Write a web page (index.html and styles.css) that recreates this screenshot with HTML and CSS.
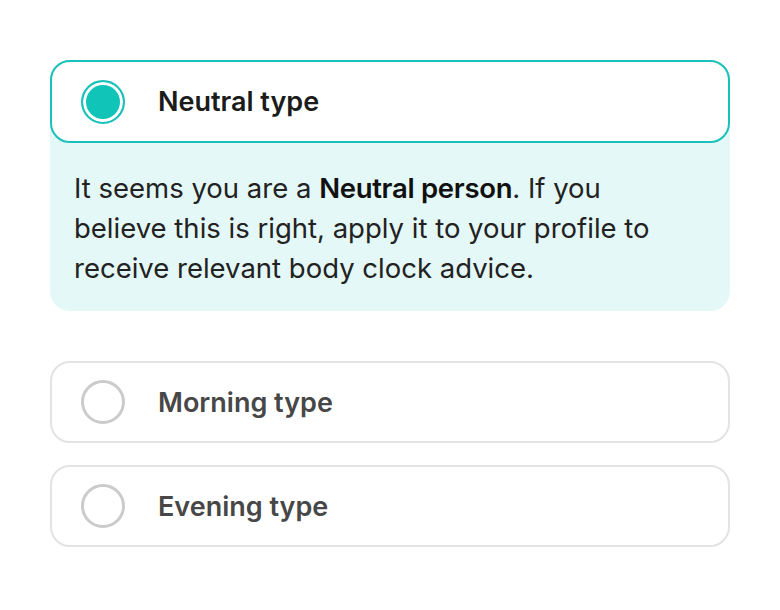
FILE: index.html
```html
<!DOCTYPE html>
<html>
<head>
<meta charset="utf-8">
<link rel="stylesheet" href="styles.css">
</head>
<body>
<div class="list">
  <div class="group">
    <div class="option selected">
      <span class="radio on"></span>
      <span class="label">Neutral type</span>
    </div>
    <p class="desc">It seems you are a <b>Neutral person</b>. If you believe this is right, apply it to your profile to receive relevant body clock advice.</p>
  </div>
  <div class="option">
    <span class="radio"></span>
    <span class="label">Morning type</span>
  </div>
  <div class="option">
    <span class="radio"></span>
    <span class="label">Evening type</span>
  </div>
</div>
</body>
</html>
```
FILE: styles.css
```css
html, body {
  margin: 0;
  padding: 0;
  background: #ffffff;
}
body {
  font-family: Inter, "Liberation Sans", sans-serif;
}
.list {
  width: 680px;
  padding: 60px 0 0 50px;
  display: flex;
  flex-direction: column;
  gap: 22px;
}
.group {
  background: #e4f8f7;
  border-radius: 20px;
  margin-bottom: 28px;
}
.option {
  box-sizing: border-box;
  height: 82px;
  border: 2px solid #e3e3e3;
  border-radius: 20px;
  background: #fff;
  display: flex;
  align-items: center;
  padding-left: 29px;
  gap: 33px;
}
.option.selected {
  height: 83px;
  border-color: #18c1b9;
}
.radio {
  box-sizing: border-box;
  width: 44px;
  height: 44px;
  border-radius: 50%;
  border: 3px solid #cbcbcb;
  flex: none;
}
.radio.on {
  border: 2px solid #18c1b9;
  background: #10c4b8;
  box-shadow: inset 0 0 0 3px #fff;
}
.label {
  font-size: 27px;
  font-weight: 600;
  color: #474747;
  letter-spacing: 0;
}
.selected .label {
  color: #1b1b1b;
}
.desc {
  margin: 0;
  padding: 25px 36px 23px 24px;
  font-size: 27.5px;
  line-height: 40px;
  color: #222;
}
.desc b {
  font-weight: 600;
  color: #111;
  letter-spacing: -0.3px;
}
```
